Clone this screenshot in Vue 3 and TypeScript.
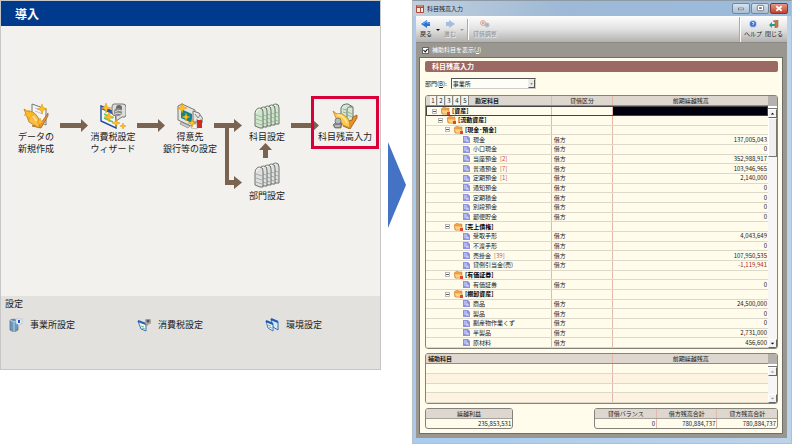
<script setup lang="ts">
import { ref } from 'vue'

type Icon = 'data' | 'wizard' | 'client' | 'ledger' | 'dept' | 'balance'

interface FlowNode {
  icon: Icon
  lines: string[]
  x: number
  y: number
  active?: boolean
}

interface Row {
  level: number
  name: string
  group?: boolean
  subs?: number
  amount?: string
}

const nodes: FlowNode[] = [
  { icon: 'data', lines: ['データの', '新規作成'], x: 35, y: 77 },
  { icon: 'wizard', lines: ['消費税設定', 'ウィザード'], x: 112, y: 77 },
  { icon: 'client', lines: ['得意先', '銀行等の設定'], x: 189, y: 77 },
  { icon: 'ledger', lines: ['科目設定'], x: 266, y: 77 },
  { icon: 'dept', lines: ['部門設定'], x: 266, y: 136 },
  { icon: 'balance', lines: ['科目残高入力'], x: 344, y: 77, active: true },
]

const rows: Row[] = [
  { level: 0, name: '[資産]', group: true },
  { level: 1, name: '[流動資産]', group: true },
  { level: 2, name: '[現金･預金]', group: true },
  { level: 3, name: '現金', amount: '137,005,043' },
  { level: 3, name: '小口現金', amount: '0' },
  { level: 3, name: '当座預金', subs: 2, amount: '352,988,917' },
  { level: 3, name: '普通預金', subs: 7, amount: '103,946,965' },
  { level: 3, name: '定期預金', subs: 1, amount: '2,140,000' },
  { level: 3, name: '通知預金', amount: '0' },
  { level: 3, name: '定期積金', amount: '0' },
  { level: 3, name: '別段預金', amount: '0' },
  { level: 3, name: '郵便貯金', amount: '0' },
  { level: 2, name: '[売上債権]', group: true },
  { level: 3, name: '受取手形', amount: '4,043,649' },
  { level: 3, name: '不渡手形', amount: '0' },
  { level: 3, name: '売掛金', subs: 39, amount: '107,950,535' },
  { level: 3, name: '貸倒引当金(売)', amount: '-1,119,941' },
  { level: 2, name: '[有価証券]', group: true },
  { level: 3, name: '有価証券', amount: '0' },
  { level: 2, name: '[棚卸資産]', group: true },
  { level: 3, name: '商品', amount: '24,500,000' },
  { level: 3, name: '製品', amount: '0' },
  { level: 3, name: '副産物作業くず', amount: '0' },
  { level: 3, name: '半製品', amount: '2,731,000' },
  { level: 3, name: '原材料', amount: '456,600' },
]

const totals = [
  { label: '貸借バランス', value: '0' },
  { label: '借方残高合計', value: '780,884,737' },
  { label: '貸方残高合計', value: '780,884,737' },
]

const showSubs = ref(true)
const department = ref('事業所')

function star(cx: number, cy: number, r: number): string {
  const k = r * 0.26
  return `M${cx} ${cy - r}L${cx + k} ${cy - k}L${cx + r} ${cy}L${cx + k} ${cy + k}L${cx} ${cy + r}L${cx - k} ${cy + k}L${cx - r} ${cy}L${cx - k} ${cy - k}Z`
}
const pages = [4, 3, 2, 1, 0]
</script>

<template>
  <main class="page">
    <section class="guide">
      <h1>導入</h1>
      <div class="canvas">
        <svg class="links" viewBox="0 0 379 270" aria-hidden="true">
          <g class="link">
            <path d="M59 97H80V93L87 99.500L80 106V102H59Z" />
            <path d="M136 97H157V93L164 99.500L157 106V102H136Z" />
            <path d="M213 97H233V93L241 99.500L233 106V102H228V154H233V150L241 156.500L233 163V159H224V102H213Z" />
            <path d="M262 132V124H258L264.500 117L271 124H267V132Z" />
            <path d="M290 97H311V93L318 99.500L311 106V102H290Z" />
          </g>
        </svg>
        <button
          v-for="n in nodes"
          :key="n.icon"
          type="button"
          class="node"
          :class="{ active: n.active }"
          :style="{ left: n.x + 'px', top: n.y + 'px' }"
        >
          <svg viewBox="0 0 26 26" aria-hidden="true">
            <template v-if="n.icon === 'data'">
              <path d="M9 1L23 6V22L9 15Z" fill="#f4f4f4" stroke="#777" />
              <path d="M12 5L20 8M12 8L20 11" stroke="#c4c4c4" />
              <path d="M18 20L25 10V13L18 25L9 23Z" fill="#e8953a" stroke="#9a5b14" stroke-width=".7" />
              <path d="M1 6L4 8Q11 8 14 13Q17 16 16 25L6 19Z" fill="#fdbb43" stroke="#b67a1c" stroke-width=".8" />
              <path d="M4 10Q11 11 14 20" fill="none" stroke="#ffe29a" stroke-width="1.500" />
              <g class="spark" stroke-width=".5"><path :d="star(19, 6, 5)" /><path :d="star(6, 12, 5)" /><path :d="star(17, 19, 4)" /></g>
            </template>
            <template v-else-if="n.icon === 'wizard'">
              <path d="M1 3L16 10V25L1 18Z" fill="#f5f8fc" stroke="#1b4ca0" stroke-width="1.400" />
              <path d="M1 3L16 10V13L1 6Z" fill="#2358b8" />
              <path d="M4 11L13 15M4 15L13 19" stroke="#53c56a" stroke-width="1.500" />
              <path d="M14 1H23Q26 1 26 4V12Q26 15 22 14L16 18V13Q12 13 12 9V4Q12 1 14 1Z" fill="#dedede" stroke="#777" />
              <circle cx="19" cy="5" r="3" fill="#666" />
              <circle cx="18" cy="9" r="4" fill="#888" />
              <path d="M15 9Q18 6 22 8M15 11Q18 9 21 11" fill="none" stroke="#ddd" />
              <g class="spark" stroke-width=".5"><path :d="star(6, 5, 5)" /><path :d="star(9, 14, 5)" /><path :d="star(16, 20, 4)" /><path :d="star(23, 23, 3)" /></g>
            </template>
            <template v-else-if="n.icon === 'client'">
              <path d="M1 3L5 1L18 7V21L14 23L1 17Z" fill="#e4e5e1" stroke="#777" />
              <path d="M4 6L15 11V20L4 15Z" fill="#118587" />
              <path d="M4 19L13 23L11 25L3 21Z" fill="#ccc" stroke="#777" stroke-width=".6" />
              <path d="M16 8L22 10L26 16V19H16Z" fill="#e4e4e4" stroke="#777" />
              <path d="M18 11L21 15L23 12M20 16V20M24 16V20" stroke="#888" fill="none" />
              <rect x="20" y="17" width="5" height="8" fill="#cf2920" />
              <path d="M14 25L16 21H20V26Z" fill="#f4f4f4" stroke="#888" stroke-width=".5" />
              <g class="spark" stroke-width=".5"><path :d="star(5, 5, 5)" /><path :d="star(9, 14, 4)" /><path :d="star(15, 20, 4)" /></g>
            </template>
            <template v-else-if="n.icon === 'ledger' || n.icon === 'dept'">
              <g v-for="p in pages" :key="p" :transform="`translate(${p * 4} ${-p})`">
                <path
                  d="M1 23V10Q2 5 6 5Q9 5 9 9V25Q7 26 1 23Z"
                  :fill="n.icon === 'ledger' ? '#cfe6cc' : '#dfdfdf'"
                  stroke="#5f665f"
                  stroke-width=".9"
                />
                <path d="M2 12L8 14M2 16L8 18M2 20L8 22" :stroke="n.icon === 'ledger' ? '#92b393' : '#9a9a9a'" stroke-width=".8" />
                <path d="M2 10Q3 6 6 6" fill="none" stroke="#fff" stroke-width=".8" />
              </g>
            </template>
            <template v-else>
              <path d="M9 14V5Q10 1 14 1H16L21 4V20Z" fill="#d3e7d1" stroke="#66706a" />
              <path d="M15 19V7Q15 3 20 4" fill="none" stroke="#66706a" />
              <path d="M11 6L14 7M11 9L14 10M16 9L20 11M16 12L20 14" stroke="#92b393" />
              <path d="M17 18L20 17L21 14L25 12V15L18 26L11 23Z" fill="#e8912c" stroke="#94580f" stroke-width=".8" />
              <path d="M1 8L5 11Q10 9 13 13Q18 15 18 25L6 20L4 15Z" fill="#ffc94e" stroke="#c08320" stroke-width=".8" />
              <path d="M5 12Q12 12 15 20" fill="none" stroke="#ffe9a6" stroke-width="1.500" />
              <path d="M1 22L4 19L10 20L9 25L3 25Z" fill="#8a8a8a" stroke="#555" stroke-width=".6" />
              <circle cx="6" cy="18" r="3" fill="#b9b9b9" stroke="#555" stroke-width=".6" />
              <path d="M3 23L8 23" stroke="#e5e5e5" />
            </template>
          </svg>
          <span v-for="l in n.lines" :key="l">{{ l }}</span>
        </button>
      </div>
      <div class="settings">
        <h2>設定</h2>
        <div class="setting-list">
          <button type="button">
            <svg viewBox="0 0 14 14" aria-hidden="true">
              <path d="M1 2L5 1L9 3V12L5 14L1 12Z" fill="#6e98b8" stroke="#526a7d" stroke-width=".7" />
              <path d="M1 2L5 4L9 3M5 4V14" stroke="#b7d4e6" fill="none" />
              <path d="M7 1H13V6H11L9 9V6H7Z" fill="#eaf1fa" stroke="#9aabc0" stroke-width=".5" />
              <path d="M10 2V5" stroke="#1c55c8" stroke-width="2" />
            </svg>
            事業所設定
          </button>
          <button type="button">
            <svg viewBox="0 0 14 14" aria-hidden="true">
              <path d="M1 3L9 6V13L4 11Z" fill="#f2f8fb" stroke="#3975b5" />
              <path d="M1 3L9 6" stroke="#2860b0" stroke-width="2" />
              <path d="M4 8L7 9M5 10L8 11" stroke="#6cb98a" />
              <rect x="8" y="1" width="6" height="5" rx="1" fill="#a5a5a5" />
              <circle cx="11" cy="3" r="1.500" fill="#555" /><path d="M9 6L9 9L12 6" fill="#999" />
            </svg>
            消費税設定
          </button>
          <button type="button">
            <svg viewBox="0 0 14 14" aria-hidden="true">
              <path d="M6 1L13 4V12L8 9Z" fill="#d8e9f7" stroke="#376eb4" />
              <path d="M6 1L13 4" stroke="#1f5bb0" stroke-width="2" />
              <path d="M1 3L8 6V13L3 10Z" fill="#f0f7fb" stroke="#3f78b8" />
              <path d="M1 3L8 6" stroke="#1f5bb0" stroke-width="2" />
              <path d="M3 7L6 8M4 9L7 10" stroke="#79bd95" />
            </svg>
            環境設定
          </button>
        </div>
      </div>
    </section>

    <svg class="pointer" viewBox="0 0 18 86" aria-hidden="true"><path d="M0 0L18 43L0 86Z" fill="#4472c4" /></svg>

    <section class="window">
      <header class="titlebar">
        <svg viewBox="0 0 8 8" aria-hidden="true">
          <rect width="8" height="8" rx="1" fill="#b2473a" />
          <path d="M1 3H4V7H1ZM5 3H7V7H5Z" fill="#fbeedd" />
          <path d="M2 0V2M4 0V2M6 0V2" stroke="#f4d9cd" stroke-width=".8" />
        </svg>
        <span>科目残高入力</span>
        <div class="winbtns">
          <button type="button" aria-label="最小化"><svg viewBox="0 0 18 9"><rect x="6" y="4" width="6" height="2" fill="#fff" stroke="#555" stroke-width=".7" /></svg></button>
          <button type="button" aria-label="最大化"><svg viewBox="0 0 18 9"><rect x="6" y="1" width="7" height="6" rx="1" fill="#fff" stroke="#555" stroke-width=".8" /><rect x="8" y="3" width="3" height="2" fill="#777" /></svg></button>
          <button type="button" class="close" aria-label="閉じる"><svg viewBox="0 0 18 9"><path d="M6 2L12 7M12 2L6 7" stroke="#fff" stroke-width="2" /></svg></button>
        </div>
      </header>

      <div class="client">
        <div class="toolbar">
          <button type="button" class="tool">
            <svg viewBox="0 0 10 8"><path d="M0 4L6 0V2H9V6H6V8Z" fill="#2c72d6" /><path d="M2 4L6 1V3H9" fill="none" stroke="#8cc0fa" stroke-width=".8" /></svg>
            戻る
          </button>
          <svg class="drop" viewBox="0 0 4 8"><path d="M0 4H4L2 6Z" fill="#111" /></svg>
          <button type="button" class="tool off">
            <svg viewBox="0 0 10 8"><path d="M10 4L4 0V2H1V6H4V8Z" fill="#a3bde2" /></svg>
            進む
          </button>
          <svg class="drop" viewBox="0 0 4 8"><path d="M0 4H4L2 6Z" fill="#999" /></svg>
          <i class="divider"></i>
          <button type="button" class="tool off wide">
            <svg viewBox="0 0 10 8"><circle cx="3" cy="3" r="2.500" fill="#ecd9d0" stroke="#d8a393" stroke-width=".8" /><circle cx="7" cy="5" r="2" fill="#c8cfdc" stroke="#9caccc" stroke-width=".8" /><path d="M2 3H4M6 5H8" stroke="#c97f6c" /></svg>
            貸借調整
          </button>
          <i class="divider end"></i>
          <button type="button" class="tool">
            <svg viewBox="0 0 10 8"><circle cx="5" cy="4" r="4" fill="#c3d3f2" /><circle cx="5" cy="4" r="3" fill="#3f6fd0" /><path d="M4 3Q5 1 6 3Q6 4 5 4V5M5 6V6.500" fill="none" stroke="#fff" stroke-width=".8" /></svg>
            ヘルプ
          </button>
          <button type="button" class="tool">
            <svg viewBox="0 0 10 8"><path d="M4 1L9 0V7L6 8V2Z" fill="#c47d45" stroke="#8d4f25" stroke-width=".5" /><path d="M0 5L3 2V4H6V6H3V8Z" fill="#2b9a8e" /></svg>
            閉じる
          </button>
        </div>

        <label class="check"><input v-model="showSubs" type="checkbox" /><span>補助科目を表示(<u>J</u>)</span></label>

        <div class="sheet">
          <h2>科目残高入力</h2>
          <div class="dept">
            <label for="dept">部門(<u>B</u>):</label>
            <div class="combo">
              <select id="dept" v-model="department"><option>事業所</option></select>
              <svg viewBox="0 0 7 8" aria-hidden="true"><path d="M2 4H5L3.500 5.500Z" fill="#111" /></svg>
            </div>
          </div>

          <div class="box">
            <table class="main">
              <thead>
                <tr>
                  <th class="acct"><button v-for="i in 5" :key="i" type="button">{{ i }}</button><b>勘定科目</b></th>
                  <th>貸借区分</th>
                  <th>前期繰越残高</th>
                </tr>
              </thead>
              <tbody>
                <tr v-for="(r, i) in rows" :key="i" :class="{ current: i === 0 }">
                  <td :class="['name', 'l' + r.level, { group: r.group }]">
                    <template v-if="r.group">
                      <svg class="fold" viewBox="0 0 5 5"><rect x=".5" y=".5" width="4" height="4" fill="#fff" stroke="#aaa" stroke-width=".8" /><path d="M1 2.500H4" stroke="#333" stroke-width=".8" /></svg>
                      <svg class="folder" viewBox="0 0 9 8"><path d="M0 2L3 0L5 1H8V7H1Z" fill="#f2a54a" stroke="#ce7231" stroke-width=".5" /><path d="M0 3H7L9 7H2Z" fill="#ffd37b" stroke="#d6853a" stroke-width=".5" /><path d="M6 5H9V8H6Z" fill="#d9482f" /></svg>
                    </template>
                    <svg v-else class="leaf" viewBox="0 0 7 7"><path d="M0 0H5L7 2V7H0Z" fill="#8c93dc" /><path d="M1 2H4M1 4H5M3 5H6" stroke="#e4e6ff" stroke-width=".9" /></svg>
                    <span>{{ r.name }}</span><em v-if="r.subs">[{{ r.subs }}]</em>
                  </td>
                  <td class="side">{{ r.group ? '' : '借方' }}</td>
                  <td class="num" :class="{ negative: r.amount?.startsWith('-') }">{{ r.amount }}</td>
                </tr>
              </tbody>
            </table>
            <div class="scroll">
              <i class="corner"></i><i class="cap"></i>
              <button type="button" aria-label="上へ"><svg viewBox="0 0 8 8"><path d="M2 5H6L4 3Z" /></svg></button>
              <i class="thumb"></i><i class="track"></i>
              <button type="button" aria-label="下へ"><svg viewBox="0 0 8 8"><path d="M2 3H6L4 5Z" /></svg></button>
            </div>
          </div>

          <div class="box">
            <table class="sub">
              <thead><tr><th class="left"><b>補助科目</b></th><th>前期繰越残高</th></tr></thead>
              <tbody><tr v-for="i in 4" :key="i"><td></td><td></td></tr></tbody>
            </table>
            <div class="scroll idle">
              <i class="corner"></i><i class="cap"></i>
              <button type="button" aria-label="上へ"><svg viewBox="0 0 8 8"><path d="M2 5H6L4 3Z" /></svg></button>
              <i class="track"></i>
              <button type="button" aria-label="下へ"><svg viewBox="0 0 8 8"><path d="M2 3H6L4 5Z" /></svg></button>
            </div>
          </div>

          <div class="totals">
            <table class="sum one">
              <thead><tr><th>繰越利益</th></tr></thead>
              <tbody><tr><td class="num">235,853,531</td></tr></tbody>
            </table>
            <table class="sum three">
              <thead><tr><th v-for="t in totals" :key="t.label">{{ t.label }}</th></tr></thead>
              <tbody><tr><td v-for="t in totals" :key="t.label" class="num">{{ t.value }}</td></tr></tbody>
            </table>
          </div>
        </div>
      </div>
    </section>
  </main>
</template>

<style>
body {
  margin: 0;
  background: #fff;
}
</style>

<style scoped>
* {
  box-sizing: border-box;
}
.page {
  display: grid;
  grid-template-columns: 381fr 31fr 380fr;
  align-items: start;
  font-family: "Noto Sans CJK JP", sans-serif;
  color: #1a1a1a;
}
button {
  margin: 0;
  padding: 0;
  border: 0;
  background: none;
  font: inherit;
  color: inherit;
}
svg {
  display: block;
  flex: none;
}
h1,
h2 {
  margin: 0;
}

/* Guide panel */
.guide {
  border: 1px solid #c6c6c6;
  background: #f2f1ed;
  font-size: 9px;
}
h1 {
  height: 25px;
  padding-left: 14px;
  background: #003a8c;
  color: #fff;
  font-size: 12px;
  line-height: 25px;
}
.canvas {
  position: relative;
  height: 270px;
}
.links {
  position: absolute;
  left: 0;
  top: 0;
  width: 379px;
  height: 270px;
}
.link {
  fill: #7a6351;
}
.node {
  position: absolute;
  width: 68px;
  margin-left: -34px;
  display: flex;
  flex-direction: column;
  align-items: center;
  line-height: 12px;
  white-space: nowrap;
}
.node svg {
  width: 26px;
  height: 26px;
  margin-bottom: 2px;
}
.node.active {
  height: 53px;
  margin-top: -7px;
  padding-top: 4px;
  border: 3px solid #d9003a;
}
.spark {
  fill: #ffc21c;
  stroke: #e09100;
}
.settings {
  height: 73px;
  padding: 1px 0 0 4px;
  background: #e2e1de;
}
.settings h2 {
  font-size: 9px;
  font-weight: 400;
  line-height: 14px;
}
.setting-list {
  display: grid;
  grid-template-columns: 128fr 128fr 115fr;
  padding: 7px 0 0 4px;
}
.setting-list button {
  display: flex;
  align-items: center;
  gap: 7px;
  line-height: 14px;
}
.setting-list svg {
  width: 14px;
  height: 14px;
}

.pointer {
  width: 18px;
  height: 86px;
  margin-top: 142px;
  justify-self: center;
}

/* Application window */
.window {
  padding: 0 4px 5px 3px;
  border: 1px solid #b9bec4;
  border-top-color: #8d9aa6;
  background: linear-gradient(90deg, #a9cbee, #bcd3ea);
  font-size: 6px;
  line-height: 8px;
  white-space: nowrap;
}
.titlebar {
  display: flex;
  align-items: center;
  gap: 3px;
  height: 15px;
  margin: 0 -4px 0 -3px;
  padding: 0 3px 0 3px;
  background: linear-gradient(90deg, #c2cfdc, #9db9d6 40%, #9cbbdc);
}
.titlebar > svg {
  width: 8px;
  height: 8px;
}
.winbtns {
  display: flex;
  gap: 1px;
  margin-left: auto;
}
.winbtns button {
  width: 18px;
  height: 11px;
  border: 1px solid #76879a;
  border-radius: 2px;
  background: linear-gradient(#d6e2ee, #a9bed4);
}
.winbtns .close {
  border-color: #7b3b33;
  background: linear-gradient(#e29a8c, #c5402a);
}
.winbtns svg {
  width: 100%;
  height: 9px;
}
.client {
  padding-bottom: 4px;
  background: #9a9790;
}
.toolbar {
  display: flex;
  align-items: center;
  gap: 3px;
  height: 27px;
  padding: 0 4px 0 3px;
  border-bottom: 1px solid #8b8983;
  background: linear-gradient(#fdfdfd, #e2e2e2 50%, #b3b2b0);
}
.tool {
  display: flex;
  flex-direction: column;
  align-items: center;
  gap: 2px;
  width: 14px;
}
.tool svg {
  width: 10px;
  height: 8px;
}
.tool.off {
  color: #8c8c8c;
  text-shadow: 1px 1px 0 #f4f4f4;
}
.tool.wide {
  width: 26px;
}
.drop {
  width: 4px;
  height: 8px;
}
.divider {
  width: 2px;
  height: 21px;
  border-left: 1px solid #a9a8a6;
  border-right: 1px solid #fff;
}
.divider.end {
  margin-left: auto;
  height: 25px;
}
.toolbar .tool:nth-last-child(-n + 2) {
  width: 18px;
}
.check {
  display: flex;
  align-items: center;
  gap: 3px;
  height: 14px;
  padding-left: 6px;
  color: #fff;
}
.check input {
  display: grid;
  place-items: center;
  appearance: none;
  width: 7px;
  height: 7px;
  margin: 0;
  border: 1px solid #666;
  background: #fff;
}
.check input:checked::after {
  content: "";
  width: 2px;
  height: 3px;
  border: solid #111;
  border-width: 0 1px 1px 0;
  rotate: 40deg;
}
.sheet {
  margin: 0 4px 0 3px;
  padding: 3px 4px 4px 5px;
  border: 1px solid #6f6d68;
  background: #fffcec;
}
.sheet h2 {
  height: 11px;
  padding-left: 7px;
  border-radius: 2px;
  background: #9b6864;
  color: #fff;
  font-size: 7px;
  line-height: 11px;
}
.dept {
  display: flex;
  align-items: center;
  gap: 4px;
  height: 11px;
  margin: 6px 0;
}
.combo {
  display: flex;
  width: 85px;
  height: 11px;
  border: 1px solid;
  border-color: #555 #ccc #ccc #555;
  background: #fffef6;
}
.combo select {
  flex: 1;
  min-width: 0;
  height: 9px;
  margin: 0;
  padding: 0 0 0 1px;
  border: 0;
  appearance: none;
  background: none;
  font: inherit;
  line-height: 9px;
  color: #1a1a1a;
}
.combo svg {
  width: 7px;
  height: 9px;
  border: 1px solid;
  border-color: #eee #555 #555 #eee;
  background: #ece9e2;
}

/* Tables */
.box {
  display: flex;
  margin-bottom: 4px;
  border: 1px solid #85827d;
  border-radius: 3px;
  overflow: hidden;
}
.box table {
  flex: 1;
}
table,
thead,
tbody {
  display: grid;
}
tr {
  display: grid;
}
.main tr {
  grid-template-columns: 125fr 62fr 156fr;
}
.sub tr {
  grid-template-columns: 187fr 156fr;
}
thead tr {
  height: 10px;
  background: #ddd7cf;
  border-bottom: 1px solid #8f8b85;
}
th,
td {
  display: flex;
  align-items: center;
  min-width: 0;
  min-height: 0;
  padding: 0 2px;
}
th {
  justify-content: center;
  font-weight: 400;
}
th + th,
td + td {
  border-left: 1px solid #e5b8ac;
}
.main tbody {
  height: 242px;
  grid-auto-rows: 1fr;
}
.sub tbody {
  height: 39px;
  grid-auto-rows: 1fr;
}
tbody tr {
  border-bottom: 1px solid #dcd8ca;
}
.sub tbody tr:nth-child(even) {
  background: #fdf3e0;
}
th.left {
  justify-content: flex-start;
}
th.acct {
  justify-content: flex-start;
  padding-left: 4px;
}
.acct button {
  width: 7px;
  height: 9px;
  border-right: 1px solid #8c8983;
  background: #f6f4ef;
  line-height: 9px;
}
.acct button + button {
  margin-left: 1px;
}
.acct b {
  margin-left: 6px;
}
.fold {
  width: 5px;
  height: 5px;
}
.folder {
  width: 9px;
  height: 8px;
  margin: 0 2px 0 4px;
}
.leaf {
  width: 7px;
  height: 7px;
  margin-right: 3px;
}
.name.l0 {
  padding-left: 5px;
}
.name.l1 {
  padding-left: 12px;
}
.name.l2 {
  padding-left: 19px;
}
.name.l3 {
  padding-left: 37px;
}
.group span {
  font-weight: 700;
  color: #000;
}
.name em {
  margin-left: 3px;
  font-style: normal;
  color: #c8523f;
}
.num {
  justify-content: flex-end;
  padding-right: 1px;
}
.num.negative {
  color: #a32b20;
}
.current {
  border: 1px solid #444;
}
.current .num {
  background: #00000f;
}

.scroll {
  display: flex;
  flex-direction: column;
  width: 9px;
}
.scroll .corner {
  height: 10px;
  background: #b5b2ad;
}
.scroll .cap {
  height: 3px;
  background: #fff;
  border-bottom: 1px solid #777;
}
.scroll button {
  height: 9px;
  border: 1px solid;
  border-color: #fff #666 #666 #fff;
  background: #f4f3f1;
  fill: #000;
}
.scroll svg {
  width: 7px;
  height: 7px;
}
.thumb {
  height: 39px;
  border: 1px solid;
  border-color: #fff #777 #777 #fff;
  background: #f0efee;
}
.track {
  flex: 1;
  background: #f7f6f5;
}
.idle button {
  fill: #999;
}

/* Totals */
.totals {
  display: flex;
  justify-content: space-between;
}
.sum {
  border: 1px solid #85827d;
  border-radius: 3px;
  overflow: hidden;
}
.one {
  width: 25%;
}
.three {
  width: 52%;
}
.three tr {
  grid-template-columns: repeat(3, 1fr);
}
.sum thead tr {
  border-bottom: 1px solid #a5a19b;
}
.sum tbody tr {
  height: 9px;
  border: 0;
}
</style>
